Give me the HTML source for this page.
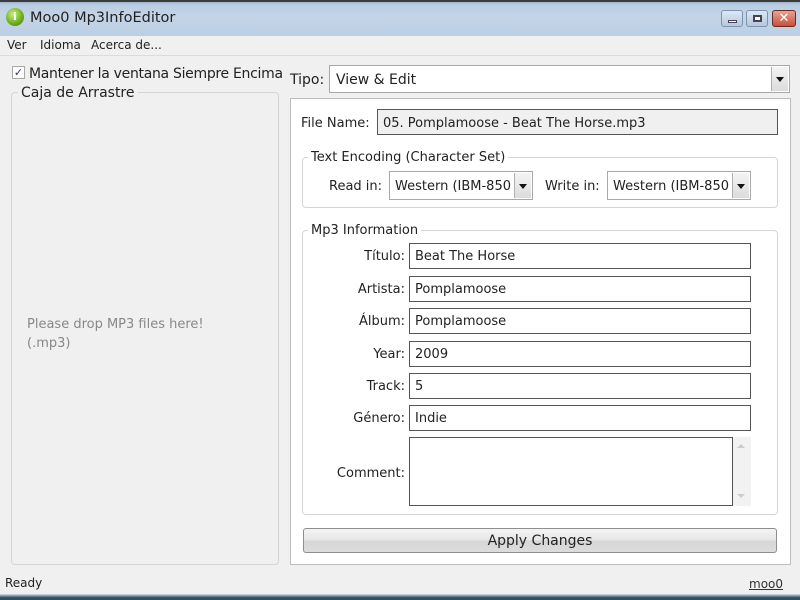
<!DOCTYPE html>
<html><head><meta charset="utf-8"><style>
*{box-sizing:border-box;margin:0;padding:0}
body{width:800px;height:600px;overflow:hidden;background:#f0f0f0;font-family:"DejaVu Sans","Liberation Sans",sans-serif;font-size:13px;color:#222;position:relative}
.a{position:absolute;white-space:nowrap}
.tb{left:0;top:0;width:800px;height:36px;background:linear-gradient(#9fb6cf 0,#b9cde2 3px,#c3d4e6 40%,#bccfe3 100%);border-top:2px solid #3a3a3a}
.grp{border:1px solid #d5d5d5;border-radius:4px}
.lbl{background:#f0f0f0;padding:0 3px}
.wl{background:#fff}
.in{background:#fff;border:1px solid #555;height:26px;padding:4px 5px;line-height:18px}
.r{text-align:right}
.cb{border:1px solid #a8a8a8;background:#fff}
.dd{position:absolute;right:1px;top:1px;bottom:1px;width:17px;background:linear-gradient(#f4f4f4,#dcdcdc);border-left:1px solid #b0b0b0}
.dd:after{content:"";position:absolute;left:4px;top:50%;margin-top:-2px;border-left:4px solid transparent;border-right:4px solid transparent;border-top:5px solid #111}
</style></head><body>
<div class="a tb"></div>
<div class="a" style="left:6px;top:8px;width:18px;height:18px;border-radius:50%;background:radial-gradient(circle at 40% 35%,#c8f080,#6aab1a 60%,#3f7a0a);"></div>
<div class="a" style="left:13px;top:10px;color:#fff;font-weight:bold;font-size:11px">i</div>
<div class="a" style="left:30px;top:10px;font-size:14.5px;color:#222">Moo0 Mp3InfoEditor</div>
<div class="a" style="left:721px;top:10px;width:22px;height:17px;border:1px solid #7d93ad;border-radius:3px;background:linear-gradient(#dce7f3,#b5c8dd)"><div style="position:absolute;left:6px;top:9px;width:9px;height:3px;background:#fff;border:1px solid #445"></div></div>
<div class="a" style="left:746px;top:10px;width:22px;height:17px;border:1px solid #7d93ad;border-radius:3px;background:linear-gradient(#dce7f3,#b5c8dd)"><div style="position:absolute;left:6px;top:4px;width:9px;height:7px;border:2px solid #445;background:#fff"></div></div>
<div class="a" style="left:772px;top:10px;width:24px;height:17px;border:1px solid #6b2b22;border-radius:3px;background:linear-gradient(#e7a393,#c9503a);color:#fff;font-weight:bold;text-align:center;font-size:13px;line-height:15px">✕</div>
<div class="a" style="left:0;top:36px;width:800px;height:20px;background:#f0f0f0;border-bottom:1px solid #dcdcdc"></div>
<div class="a" style="left:7px;top:38px;font-size:12px">Ver</div>
<div class="a" style="left:40px;top:38px;font-size:12px">Idioma</div>
<div class="a" style="left:91px;top:38px;font-size:12px">Acerca de...</div>
<div class="a cb" style="left:12px;top:66px;width:13px;height:13px;font-size:11px;line-height:11px;text-align:center;color:#335">✓</div>
<div class="a" style="left:29px;top:66px;font-size:14px;letter-spacing:-0.3px">Mantener la ventana Siempre Encima</div>
<div class="a grp" style="left:11px;top:92px;width:268px;height:473px"></div>
<div class="a lbl" style="left:18px;top:85px;font-size:14px">Caja de Arrastre</div>
<div class="a" style="left:27px;top:315px;color:#888;line-height:19px">Please drop MP3 files here!<br>(.mp3)</div>
<div class="a" style="left:290px;top:72px;font-size:14px">Tipo:</div>
<div class="a cb" style="left:329px;top:65px;width:461px;height:28px;padding:6px 6px;font-size:14px">View &amp; Edit<div class="dd"></div></div>
<div class="a" style="left:290px;top:98px;width:501px;height:467px;background:#fff;border:1px solid #bdbdbd"></div>
<div class="a" style="left:301px;top:116px">File Name:</div>
<div class="a in" style="left:377px;top:109px;width:401px;background:#f0f0f0;padding-top:5px">05. Pomplamoose - Beat The Horse.mp3</div>
<div class="a grp" style="left:302px;top:157px;width:476px;height:51px"></div>
<div class="a lbl wl" style="left:308px;top:150px">Text Encoding (Character Set)</div>
<div class="a" style="left:329px;top:179px">Read in:</div>
<div class="a cb" style="left:389px;top:171px;width:144px;height:29px;padding:7px 5px;overflow:hidden">Western (IBM-850<div class="dd"></div></div>
<div class="a" style="left:545px;top:179px">Write in:</div>
<div class="a cb" style="left:607px;top:171px;width:144px;height:29px;padding:7px 5px;overflow:hidden">Western (IBM-850<div class="dd"></div></div>
<div class="a grp" style="left:302px;top:230px;width:476px;height:285px"></div>
<div class="a lbl wl" style="left:308px;top:223px">Mp3 Information</div>
<div class="a r" style="left:300px;top:249px;width:105px">Título:</div>
<div class="a in" style="left:409px;top:243px;width:342px">Beat The Horse</div>
<div class="a r" style="left:300px;top:282px;width:105px">Artista:</div>
<div class="a in" style="left:409px;top:276px;width:342px">Pomplamoose</div>
<div class="a r" style="left:300px;top:314px;width:105px">Álbum:</div>
<div class="a in" style="left:409px;top:308px;width:342px">Pomplamoose</div>
<div class="a r" style="left:300px;top:347px;width:105px">Year:</div>
<div class="a in" style="left:409px;top:341px;width:342px">2009</div>
<div class="a r" style="left:300px;top:379px;width:105px">Track:</div>
<div class="a in" style="left:409px;top:373px;width:342px">5</div>
<div class="a r" style="left:300px;top:411px;width:105px">Género:</div>
<div class="a in" style="left:409px;top:405px;width:342px">Indie</div>
<div class="a r" style="left:300px;top:466px;width:105px">Comment:</div>
<div class="a in" style="left:409px;top:437px;width:324px;height:69px"></div>
<div class="a" style="left:733px;top:437px;width:18px;height:69px;background:#f2f2f2"></div>
<div class="a" style="left:737px;top:444px;border-left:4px solid transparent;border-right:4px solid transparent;border-bottom:4px solid #ccc"></div>
<div class="a" style="left:737px;top:494px;border-left:4px solid transparent;border-right:4px solid transparent;border-top:4px solid #ccc"></div>
<div class="a" style="left:303px;top:528px;width:474px;height:25px;border:1px solid #8e8e8e;border-radius:3px;background:linear-gradient(#f4f4f4 0,#e6e6e6 50%,#d6d6d6 51%,#dcdcdc 100%);text-align:center;line-height:25px;font-size:14px">Apply Changes</div>
<div class="a" style="left:5px;top:576px;font-size:12px">Ready</div>
<div class="a" style="left:749px;top:577px;font-size:12px;text-decoration:underline;color:#333">moo0</div>
<div class="a" style="left:0;top:594px;width:800px;height:6px;background:linear-gradient(#d7e4ef,#2f4f63 60%)"></div>
</body></html>
